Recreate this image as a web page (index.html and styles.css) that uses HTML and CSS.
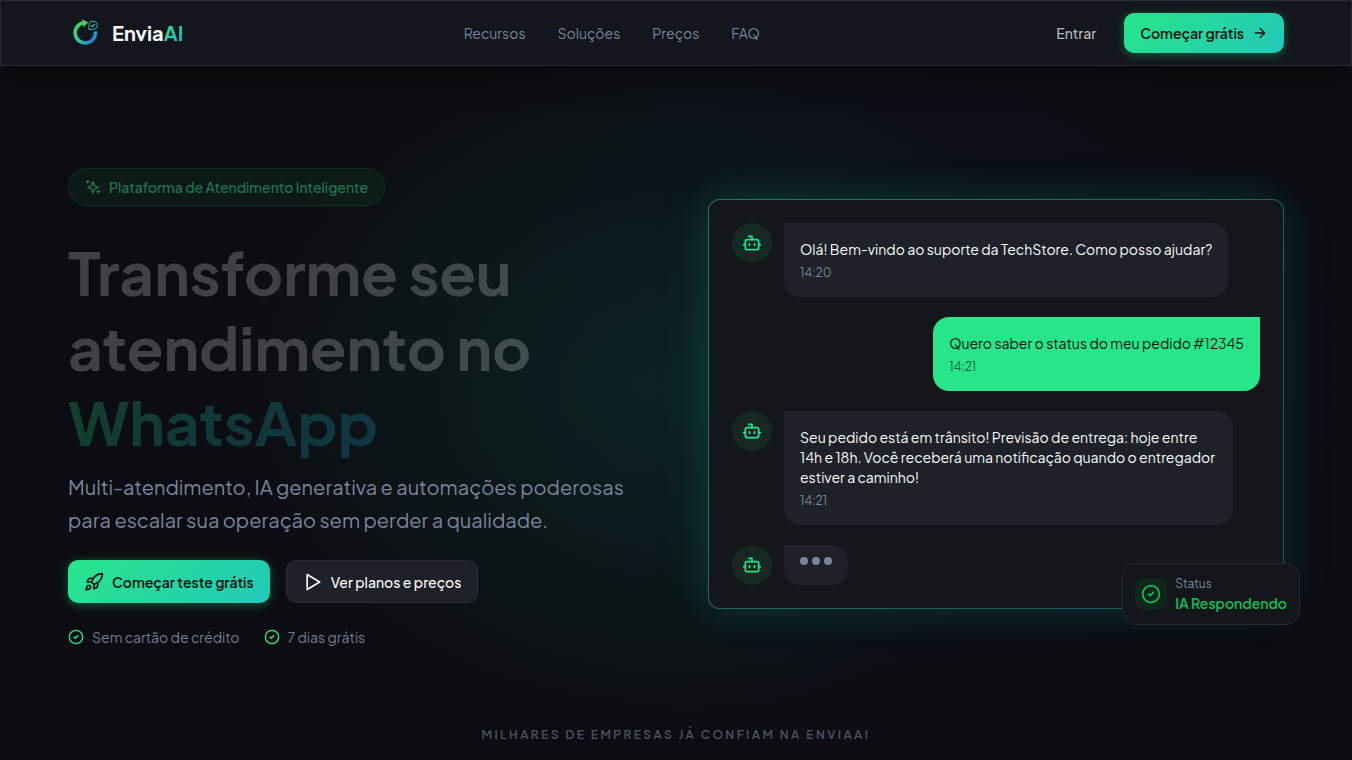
FILE: index.html
```
<!DOCTYPE html>
<html lang="pt-BR">
<head>
  <meta charset="UTF-8" />
  <meta name="viewport" content="width=device-width, initial-scale=1.0"/>
  <title>EnviaAI</title>
  <link rel="stylesheet" href="styles.css">
</head>
<body>

  <!-- Ícones reutilizados -->
  <svg class="sprite" aria-hidden="true">
    <symbol id="bot" viewBox="0 0 24 24">
      <path d="M12 8V4H8"/>
      <rect width="16" height="12" x="4" y="8" rx="2"/>
      <path d="M2 14h2M20 14h2M15 13v2M9 13v2"/>
    </symbol>
    <symbol id="check" viewBox="0 0 24 24">
      <circle cx="12" cy="12" r="10"/>
      <path d="m9 12 2 2 4-4"/>
    </symbol>
  </svg>

  <header class="header">
    <div class="container header-inner">
      <a class="brand" href="#">
        <svg class="logo" viewBox="0 0 36 36" aria-hidden="true">
          <defs>
            <linearGradient id="logoGrad" x1="6" y1="10" x2="28" y2="28" gradientUnits="userSpaceOnUse">
              <stop offset="0" stop-color="#4fce5d"/>
              <stop offset="0.5" stop-color="#2cc4a0"/>
              <stop offset="1" stop-color="#1a6fe8"/>
            </linearGradient>
          </defs>
          <path d="M15.500 7.800A10.200 10.200 0 1 0 27.400 16.500" fill="none" stroke="url(#logoGrad)" stroke-width="3.600"/>
          <path d="M14 4.300l6.200 3.200-5 5 .2-2.800-3.200.4 2.500-3z" fill="#4fce5d"/>
          <path d="M21 14.400V10a4.100 4.100 0 1 1 4.100 4.300z" fill="none" stroke="#2b9fc0" stroke-width="1.100"/>
          <path d="M23 10.200l1.500 1.500 2.600-2.800" fill="none" stroke="#3fcf9a" stroke-width="1.100"/>
        </svg>
        <span>Envia<span class="brand-ai">AI</span></span>
      </a>
      <nav class="nav">
        <a href="#recursos">Recursos</a>
        <a href="#solucoes">Soluções</a>
        <a href="#precos">Preços</a>
        <a href="#faq">FAQ</a>
      </nav>
      <div class="header-actions">
        <a class="login" href="#entrar">Entrar</a>
        <button class="btn btn-primary btn-small" type="button">
          Começar grátis
          <svg class="icon icon-16" viewBox="0 0 24 24" aria-hidden="true"><path d="M5 12h14M12 5l7 7-7 7"/></svg>
        </button>
      </div>
    </div>
  </header>

  <main class="container">
    <section class="hero">
      <div class="hero-text">
        <div class="badge">
          <svg class="icon icon-16" viewBox="0 0 24 24" aria-hidden="true">
            <path d="m12 4-1.900 5.300a2 2 0 0 1-1.200 1.200L4 12.500l4.900 1.900a2 2 0 0 1 1.200 1.200L12 21l1.900-5.400a2 2 0 0 1 1.200-1.200L20 12.500l-4.900-2a2 2 0 0 1-1.200-1.200Z"/>
            <path d="M4 2v4M2 4h4M20 17v4M18 19h4"/>
          </svg>
          Plataforma de Atendimento Inteligente
        </div>
        <h1>Transforme seu atendimento no <span class="highlight">WhatsApp</span></h1>
        <p class="lead">Multi-atendimento, IA generativa e automações poderosas para escalar sua operação sem perder a qualidade.</p>
        <div class="buttons">
          <button class="btn btn-primary" type="button">
            <svg class="icon icon-20" viewBox="0 0 24 24" aria-hidden="true">
              <path d="M4.500 16.500c-1.500 1.260-2 5-2 5s3.740-.5 5-2c.71-.84.7-2.130-.09-2.910a2.180 2.180 0 0 0-2.910-.09z"/>
              <path d="m12 15-3-3a22 22 0 0 1 2-3.950A12.880 12.880 0 0 1 22 2c0 2.720-.78 7.500-6 11a22.350 22.350 0 0 1-4 2z"/>
              <path d="M9 12H4s.55-3.030 2-4c1.620-1.080 5 0 5 0M12 15v5s3.030-.55 4-2c1.080-1.620 0-5 0-5"/>
            </svg>
            Começar teste grátis
          </button>
          <button class="btn btn-secondary" type="button">
            <svg class="icon icon-20" viewBox="0 0 24 24" aria-hidden="true"><path d="M5 3l15 9-15 9z"/></svg>
            Ver planos e preços
          </button>
        </div>
        <ul class="perks">
          <li><svg class="icon icon-16" aria-hidden="true"><use href="#check"/></svg>Sem cartão de crédito</li>
          <li><svg class="icon icon-16" aria-hidden="true"><use href="#check"/></svg>7 dias grátis</li>
        </ul>
      </div>

      <!-- Demonstração do chat -->
      <div class="demo">
        <div class="chat">
          <div class="message">
            <div class="avatar"><svg class="icon icon-20" aria-hidden="true"><use href="#bot"/></svg></div>
            <div class="bubble">
              <p>Olá! Bem-vindo ao suporte da TechStore. Como posso ajudar?</p>
              <time>14:20</time>
            </div>
          </div>
          <div class="message message-user">
            <div class="bubble bubble-user">
              <p>Quero saber o status do meu pedido #12345</p>
              <time>14:21</time>
            </div>
          </div>
          <div class="message">
            <div class="avatar"><svg class="icon icon-20" aria-hidden="true"><use href="#bot"/></svg></div>
            <div class="bubble">
              <p>Seu pedido está em trânsito! Previsão de entrega: hoje entre 14h e 18h. Você receberá uma notificação quando o entregador estiver a caminho!</p>
              <time>14:21</time>
            </div>
          </div>
          <div class="message">
            <div class="avatar"><svg class="icon icon-20" aria-hidden="true"><use href="#bot"/></svg></div>
            <div class="bubble typing"><span></span><span></span><span></span></div>
          </div>
        </div>
        <div class="status">
          <div class="status-icon"><svg class="icon icon-20" aria-hidden="true"><use href="#check"/></svg></div>
          <div>
            <div class="status-label">Status</div>
            <div class="status-value">IA Respondendo</div>
          </div>
        </div>
      </div>
    </section>

    <p class="trust">Milhares de empresas já confiam na EnviaAI</p>
  </main>

</body>
</html>
```
FILE: styles.css
```
* {
  box-sizing: border-box;
}
body {
  margin: 0;
  min-height: 100vh;
  background:
    radial-gradient(ellipse 420px 340px at 48% 51%, rgba(20, 184, 120, 0.1), transparent),
    radial-gradient(ellipse 520px 400px at 62% 48%, rgba(20, 110, 190, 0.06), transparent),
    #0c0d12;
  color: #fafafa;
  font-family: 'Plus Jakarta Sans', Inter, sans-serif;
  font-size: 14px;
  line-height: 20px;
}
a {
  color: inherit;
  text-decoration: none;
}
h1, p, ul {
  margin: 0;
  padding: 0;
}
.sprite {
  display: none;
}
.icon {
  flex: none;
  fill: none;
  stroke: currentColor;
  stroke-width: 2;
  stroke-linecap: round;
  stroke-linejoin: round;
}
.icon-16 {
  width: 16px;
  height: 16px;
}
.icon-20 {
  width: 20px;
  height: 20px;
}
.container {
  max-width: 1280px;
  margin: 0 auto;
  padding: 0 32px;
}

/* Cabeçalho */
.header {
  background: #13161c;
  border: 1px solid #272a30;
  box-shadow: 0 8px 32px rgba(0, 0, 0, 0.35);
}
.header-inner {
  display: flex;
  align-items: center;
  justify-content: space-between;
  height: 64px;
}
.brand {
  display: flex;
  align-items: center;
  gap: 8px;
  font-size: 20px;
  font-weight: 700;
}
.logo {
  width: 36px;
  height: 36px;
}
.brand-ai {
  background: linear-gradient(135deg, #2be28c, #22b8cf);
  background-clip: text;
  color: transparent;
}
.nav {
  display: flex;
  gap: 32px;
  color: #7b849b;
}
.header-actions {
  display: flex;
  align-items: center;
  gap: 12px;
}
.login {
  padding: 0 16px;
  color: #b9bbbf;
  font-weight: 500;
}
.btn {
  display: flex;
  align-items: center;
  gap: 8px;
  height: 43px;
  padding: 0 16px;
  border: 0;
  border-radius: 10px;
  font: inherit;
  font-weight: 600;
  cursor: pointer;
}
.btn-small {
  height: 40px;
}
.btn-primary {
  background: linear-gradient(135deg, #28e58a, #22c9b9);
  box-shadow: 0 2px 10px rgba(40, 229, 138, 0.35);
  color: #08130f;
}
.btn-secondary {
  background: #1e2028;
  border: 1px solid #2a2c34;
  color: #fafafa;
  font-weight: 500;
}

/* Hero */
.hero {
  display: grid;
  grid-template-columns: 1fr 1fr;
  gap: 64px;
  align-items: center;
  padding-top: 102px;
}
.badge {
  display: inline-flex;
  align-items: center;
  gap: 8px;
  padding: 8px 16px;
  background: rgba(40, 229, 138, 0.06);
  border: 1px solid rgba(40, 229, 138, 0.1);
  border-radius: 20px;
  color: #1a7a50;
  font-weight: 500;
}
h1 {
  margin-top: 28px;
  color: rgba(250, 250, 250, 0.22);
  font-size: 60px;
  font-weight: 700;
  line-height: 75px;
}
.highlight {
  background: linear-gradient(135deg, #28e58a, #1fa5d8);
  background-clip: text;
  color: transparent;
  opacity: 0.23;
}
.lead {
  margin-top: 11px;
  color: #7b849b;
  font-size: 20px;
  line-height: 33px;
}
.buttons {
  display: flex;
  gap: 16px;
  margin-top: 24px;
}
.perks {
  display: flex;
  gap: 24px;
  margin-top: 24px;
  list-style: none;
  color: #747c92;
}
.perks li {
  display: flex;
  align-items: center;
  gap: 8px;
}
.perks .icon {
  color: #28e58a;
}

/* Chat */
.demo {
  position: relative;
  margin-bottom: 8px;
}
.chat {
  display: flex;
  flex-direction: column;
  gap: 20px;
  padding: 23px;
  background: linear-gradient(#13161b, #13161b) padding-box, linear-gradient(135deg, #237a5e, #1b5063) border-box;
  border: 1px solid transparent;
  border-radius: 12px;
  box-shadow: -8px 0 44px rgba(20, 184, 100, 0.15), 8px 0 44px rgba(14, 120, 190, 0.13);
}
.message {
  display: flex;
  align-items: flex-start;
  gap: 12px;
}
.message-user {
  justify-content: flex-end;
}
.avatar {
  display: flex;
  flex: none;
  align-items: center;
  justify-content: center;
  width: 40px;
  height: 40px;
  background: #162724;
  border-radius: 50%;
  color: #28e58a;
}
.bubble {
  max-width: 85%;
  padding: 16px 16px 14px;
  background: #1f2128;
  border-radius: 0 16px 16px 16px;
}
.bubble time {
  display: block;
  margin-top: 4px;
  color: #7b849b;
  font-size: 12px;
  line-height: 20px;
}
.bubble-user {
  background: #28e58a;
  border-radius: 16px 0 16px 16px;
  color: #08130f;
}
.bubble-user time {
  color: #16633f;
}
.typing {
  display: flex;
  gap: 4px;
  height: 40px;
  padding: 12px 16px;
}
.typing span {
  width: 8px;
  height: 8px;
  background: #7b849b;
  border-radius: 50%;
}
.status {
  position: absolute;
  right: -16px;
  bottom: -16px;
  display: flex;
  align-items: center;
  gap: 8px;
  padding: 11px 12px;
  background: #13161b;
  border: 1px solid #24272e;
  border-radius: 14px;
}
.status-icon {
  display: flex;
  align-items: center;
  justify-content: center;
  width: 32px;
  height: 32px;
  background: #10261c;
  border-radius: 10px;
  color: #0fbf55;
}
.status-label {
  color: #7b849b;
  font-size: 12px;
  line-height: 18px;
}
.status-value {
  color: #0fbf55;
  font-weight: 600;
}

.trust {
  margin-top: 78px;
  color: #4b5160;
  font-size: 12px;
  font-weight: 600;
  letter-spacing: 0.2em;
  text-align: center;
  text-transform: uppercase;
}

@media (max-width: 900px) {
  .hero {
    grid-template-columns: 1fr;
    padding-top: 48px;
  }
  .nav {
    display: none;
  }
}
```
